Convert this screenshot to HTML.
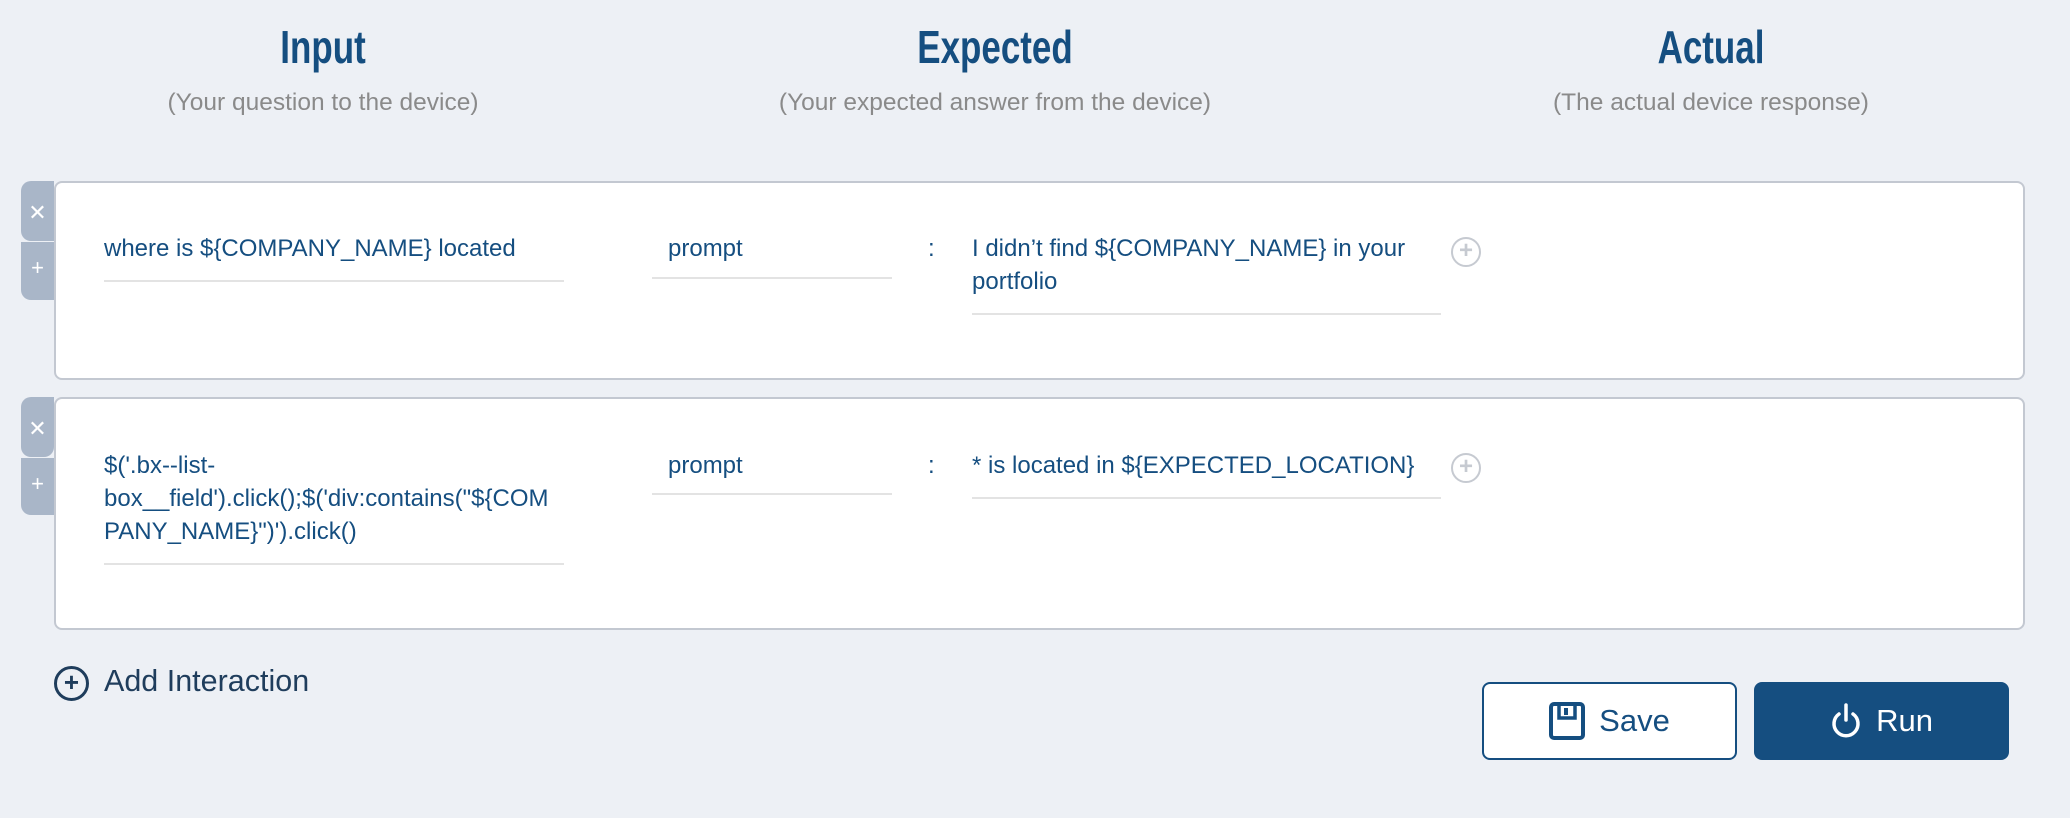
<!DOCTYPE html>
<html><head><style>
*{margin:0;padding:0;box-sizing:border-box}
body{width:2070px;height:818px;background:#edf0f5;font-family:"Liberation Sans",sans-serif;position:relative;overflow:hidden}
.h{position:absolute;top:20px;width:500px;margin-left:-250px;text-align:center;color:#154e80;font-weight:bold;font-size:46px;transform:scaleX(0.76)}
.s{position:absolute;top:89px;width:700px;margin-left:-350px;text-align:center;color:#8a8a8a;font-size:24.5px}
.card{position:absolute;left:54px;width:1971px;background:#fff;border:2px solid #c3c8d1;border-radius:8px}
.tab{position:absolute;left:21px;width:33px;background:#a9b6c8;border-radius:10px 0 0 10px;color:#fff;font-size:22px;text-align:center}
.t{position:absolute;color:#154e80;font-size:24px;line-height:33px;white-space:nowrap}
.u{position:absolute;height:2px;background:#e3e3e3}
.pc{position:absolute;width:30px;height:30px;border:2.5px solid #c6cad1;border-radius:50%;color:#c6cad1;font-size:24px;line-height:23px;text-align:center;font-weight:bold}
.btn{position:absolute;top:682px;height:78px;width:255px;border-radius:8px;font-size:31px;display:flex;align-items:center;justify-content:center;gap:14px}
</style></head><body>
<div class="h" style="left:323px">Input</div>
<div class="h" style="left:995px">Expected</div>
<div class="h" style="left:1711px">Actual</div>
<div class="s" style="left:323px">(Your question to the device)</div>
<div class="s" style="left:995px">(Your expected answer from the device)</div>
<div class="s" style="left:1711px">(The actual device response)</div>

<div class="card" style="top:181px;height:199px"></div>
<div class="tab" style="top:181px;height:60px;line-height:64px">✕</div>
<div class="tab" style="top:242px;height:58px;line-height:52px;border-radius:0 0 0 10px">+</div>
<div class="t" style="left:104px;top:232px">where is ${COMPANY_NAME} located</div>
<div class="u" style="left:104px;width:460px;top:280px"></div>
<div class="t" style="left:668px;top:232px">prompt</div>
<div class="u" style="left:652px;width:240px;top:277px"></div>
<div class="t" style="left:928px;top:232px">:</div>
<div class="t" style="left:972px;top:232px;width:470px">I didn’t find ${COMPANY_NAME} in your<br>portfolio</div>
<div class="u" style="left:972px;width:469px;top:313px"></div>
<div class="pc" style="left:1451px;top:237px">+</div>

<div class="card" style="top:397px;height:233px"></div>
<div class="tab" style="top:397px;height:60px;line-height:64px;border-radius:10px 0 10px 10px">✕</div>
<div class="tab" style="top:458px;height:57px;line-height:52px;border-radius:0 0 0 10px">+</div>
<div class="t" style="left:104px;top:449px">$('.bx--list-<br>box__field').click();$('div:contains("${COM<br>PANY_NAME}")').click()</div>
<div class="u" style="left:104px;width:460px;top:563px"></div>
<div class="t" style="left:668px;top:449px">prompt</div>
<div class="u" style="left:652px;width:240px;top:493px"></div>
<div class="t" style="left:928px;top:449px">:</div>
<div class="t" style="left:972px;top:449px">* is located in ${EXPECTED_LOCATION}</div>
<div class="u" style="left:972px;width:469px;top:497px"></div>
<div class="pc" style="left:1451px;top:453px">+</div>

<div style="position:absolute;left:54px;top:666px;width:35px;height:35px;border:3px solid #1f3d5c;border-radius:50%;color:#1f3d5c;font-weight:bold;font-size:26px;line-height:27px;text-align:center">+</div>
<div style="position:absolute;left:104px;top:664px;color:#1f3d5c;font-size:30.5px">Add Interaction</div>

<div class="btn" style="left:1482px;background:#fff;border:2px solid #154e80;color:#154e80">
<svg width="36" height="38" viewBox="0 0 36 38"><rect x="2" y="2" width="32" height="34" rx="3" fill="none" stroke="#154e80" stroke-width="4"/><rect x="10" y="2" width="16" height="14" fill="none" stroke="#154e80" stroke-width="3.5"/><rect x="15" y="6" width="4" height="7" fill="#154e80"/></svg>Save</div>
<div class="btn" style="left:1754px;background:#154e80;color:#fff">
<svg width="32" height="38" viewBox="0 0 32 38"><path d="M9 12 A12 12 0 1 0 23 12" fill="none" stroke="#fff" stroke-width="3.5" stroke-linecap="round"/><path d="M16 3 V18" stroke="#fff" stroke-width="3.5" stroke-linecap="round"/></svg>Run</div>
</body></html>
